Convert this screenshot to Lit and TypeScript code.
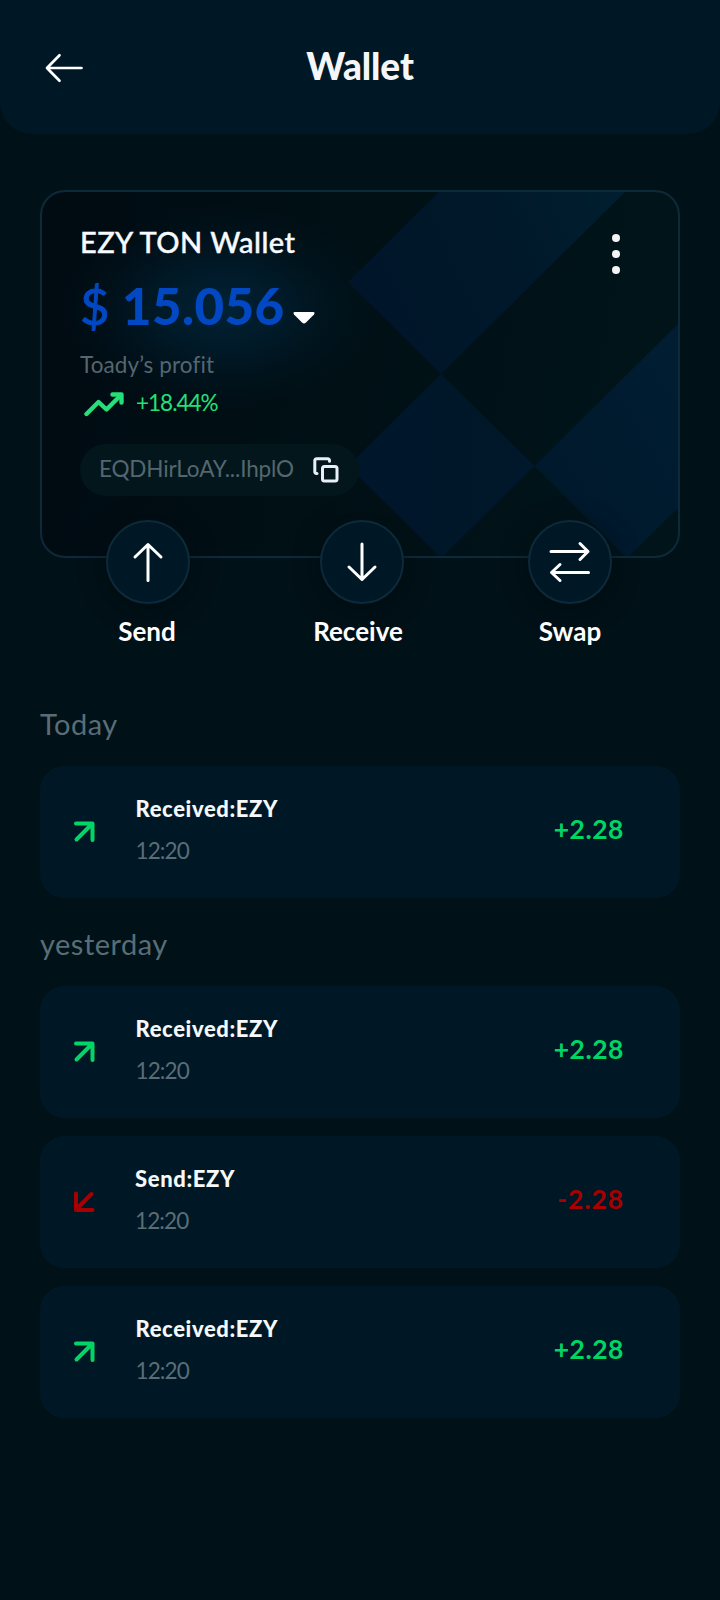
import { LitElement, html, css, svg } from "lit";
import { customElement, property } from "lit/decorators.js";

interface Tx {
  kind: "in" | "out";
  title: string;
  time: string;
  amount: string;
}

@customElement("tx-row")
class TxRow extends LitElement {
  @property({ attribute: false }) tx!: Tx;

  static styles = css`
    :host { display: block; }
    .row {
      display: flex;
      align-items: center;
      box-sizing: border-box;
      height: 132px;
      padding: 0 56px 0 31.5px;
      border-radius: 24px;
      background: #001825;
      white-space: nowrap;
    }
    .icon { display: block; width: 24px; height: 24px; }
    .in { color: #00d566; }
    .out { color: #a80000; }
    .text { display: flex; flex-direction: column; gap: 14px; margin: 0 auto 4px 40px; }
    .out-text { margin-left: 39.5px; }
    .title { font-weight: 900; font-size: 22px; line-height: 28px; color: #f6f8fa; letter-spacing: 0.62px; }
    .time { font-size: 22.5px; line-height: 28px; color: #5a6d76; letter-spacing: -0.9px; }
    .amount { font-weight: 700; font-size: 26.5px; line-height: 32px; margin-bottom: 7px; letter-spacing: 0.5px; }
    .amount.out { letter-spacing: 0.9px; }
  `;

  render() {
    const { kind, title, time, amount } = this.tx;
    const d = kind === "in" ? "M4.5 19.5 19.5 4.5M4 3.5H20.5V20" : "M19.500 4 4.500 19M4 3.500V20H20.500";
    return html`
      <div class="row">
        <svg class="icon ${kind}" viewBox="0 0 24 24" fill="none" stroke="currentColor" stroke-width="4"
          stroke-linecap="round" stroke-linejoin="round"><path d=${d} /></svg>
        <div class="text ${kind}-text">
          <span class="title">${title}</span>
          <span class="time">${time}</span>
        </div>
        <span class="amount ${kind}">${amount}</span>
      </div>
    `;
  }
}

const ACTIONS = [
  { id: "send", label: "Send", art: svg`<path d="M21 39.5V3.5M8 16 21 3.5 34 16" />` },
  { id: "receive", label: "Receive", art: svg`<path d="M21 3V38.5M8 26 21 38.5 34 26" />` },
  { id: "swap", label: "Swap", art: svg`<path d="M2 10.5H39M31 2.5 39 10.5 31 18.5M39.500 31.5H3M11 23.5 2.500 31.5 11 39.5" />` },
];

const TODAY: Tx[] = [{ kind: "in", title: "Received:EZY", time: "12:20", amount: "+2.28" }];
const YESTERDAY: Tx[] = [
  { kind: "in", title: "Received:EZY", time: "12:20", amount: "+2.28" },
  { kind: "out", title: "Send:EZY", time: "12:20", amount: "-2.28" },
  { kind: "in", title: "Received:EZY", time: "12:20", amount: "+2.28" },
];

@customElement("app-root")
class AppRoot extends LitElement {
  static styles = css`
    :host {
      display: block;
      min-height: 1600px;
      background: #001117;
      font-family: Lato, "Open Sans", sans-serif;
      white-space: nowrap;
    }
    svg { display: block; flex: none; }
    .header {
      display: grid;
      grid-template-columns: 44px 1fr 44px;
      align-items: center;
      box-sizing: border-box;
      height: 134px;
      padding: 0 42px;
      border-radius: 0 0 32px 32px;
      background: #001825;
    }
    .back { margin-top: 2px; }
    .heading { margin: 0 0 2px; text-align: center; font-size: 37px; line-height: 44px; font-weight: 900; color: #f5f6f8; letter-spacing: -0.1px; }
    .main { padding: 56px 40px 0; }
    .card {
      position: relative;
      box-sizing: border-box;
      height: 368px;
      padding: 32px 38px;
      border: 2px solid #0d2a3a;
      border-radius: 25px;
      overflow: hidden;
      background: linear-gradient(100deg, #000b12 0%, #001015 45%, #00151b 100%);
    }
    .art { position: absolute; inset: -2px; }
    .body { position: relative; display: flex; justify-content: space-between; }
    .name { font-size: 29px; line-height: 36px; font-weight: 500; color: #f7fbff; letter-spacing: 0.45px; -webkit-text-stroke: 0.4px #f7fbff; }
    .balance { display: flex; align-items: flex-end; height: 60px; margin-top: 16px; color: #0148c2; line-height: 60px; font-size: 51px; }
    .currency { width: 42px; font-size: 51px; -webkit-text-stroke: 1px #0148c2; }
    .value { width: 171px; font-weight: 900; letter-spacing: 0.4px; }
    .caret { margin-bottom: 11px; }
    .caption { margin-top: 15px; font-size: 22.5px; line-height: 28px; color: #54666f; letter-spacing: 0.1px; }
    .gain { display: flex; align-items: center; margin-top: 9px; gap: 11px; padding-left: 3px; font-size: 22.5px; line-height: 28px; color: #25e07a; }
    .percent { letter-spacing: -1px; }
    .trend { margin: 3px 0 1px; }
    .address {
      display: flex;
      align-items: center;
      justify-content: space-between;
      box-sizing: border-box;
      width: 279px;
      height: 52px;
      margin-top: 26px;
      padding: 0 19.5px 0 19px;
      border-radius: 26px;
      background: #02161c;
      color: #54666f;
      font-size: 22.5px;
      line-height: 28px;
    }
    .hash { margin-bottom: 3px; letter-spacing: -0.15px; }
    .menu { margin: 8px 19px 0 0; }
    .actions { position: relative; display: flex; margin-top: -38px; padding-left: 66px; }
    .action { display: flex; flex-direction: column; align-items: center; width: 84px; gap: 11px; }
    .receive { margin-left: 130px; }
    .swap { margin-left: 124px; }
    .circle {
      display: flex;
      align-items: center;
      justify-content: center;
      box-sizing: border-box;
      width: 84px;
      height: 84px;
      border: 2px solid #0d2a3a;
      border-radius: 50%;
      background: #001825;
      box-shadow: 0 4px 28px rgba(0, 8, 12, 0.45);
    }
    .label { font-size: 26px; line-height: 32px; font-weight: 700; color: #ffffff; }
    .send .label { margin-right: 2px; }
    .receive .label { margin: 0 -2px 0 -10px; }
    .group { margin: 0; font-size: 29px; line-height: 36px; font-weight: 400; color: #5a6d76; letter-spacing: 0.5px; }
    .today { margin-top: 59px; }
    .yesterday { margin-top: 28px; }
    .list { display: flex; flex-direction: column; gap: 18px; margin-top: 24px; }
  `;

  private renderCard() {
    return html`
      <section class="card">
        <svg class="art" width="640" height="368" viewBox="40 190 640 368">
          <defs>
            <radialGradient id="glow"><stop offset="0" stop-color="#022335" /><stop offset=".4" stop-color="#011d2e" stop-opacity=".75" /><stop offset="1" stop-color="#001420" stop-opacity="0" /></radialGradient>
            <linearGradient id="band" x1="0" x2="1" y1=".3" y2="0"><stop offset="0" stop-color="#001529" /><stop offset=".55" stop-color="#00192a" /><stop offset="1" stop-color="#001f30" /></linearGradient>
            <linearGradient id="tile" x1="0" x2="1"><stop offset="0" stop-color="#00162a" /><stop offset="1" stop-color="#00182b" /></linearGradient>
            <linearGradient id="edge" x1=".3" x2="1" y1="1" y2=".3"><stop offset="0" stop-color="#00182c" /><stop offset="1" stop-color="#001d31" /></linearGradient>
          </defs>
          <ellipse cx="222" cy="308" rx="165" ry="105" fill="url(#glow)" />
          <path fill="url(#band)" d="M441 190 348 282 441 374 627 190Z" />
          <path fill="url(#tile)" d="M441 374 348 466 441 558 534.5 466Z" />
          <path fill="url(#edge)" d="M534.5 466 680 322V506L627 558Z" />
          <rect x="41" y="191" width="638" height="366" rx="24" fill="none" stroke="#0d2a3a" stroke-width="2" />
        </svg>
        <div class="body">
          <div>
            <div class="name">EZY TON Wallet</div>
            <div class="balance">
              <span class="currency">$</span><span class="value">15.056</span>
              <svg class="caret" width="22" height="14" viewBox="0 0 22 14"><path fill="#fff" d="M2 1H20Q22.500 1.300 21 3.500L13 11.500Q11 13.500 9 11.500L1 3.500Q-.5 1.300 2 1Z" /></svg>
            </div>
            <div class="caption">Toady’s profit</div>
            <div class="gain">
              <svg class="trend" width="42" height="26" viewBox="0 0 42 26" fill="none" stroke="#25e07a" stroke-width="4.400" stroke-linecap="round" stroke-linejoin="round"><path d="M3.500 23 15.500 11 23.500 18.500 37 5" /><path d="M29.500 3.500H38.500V11.500" /></svg>
              <span class="percent">+18.44%</span>
            </div>
            <div class="address">
              <span class="hash">EQDHirLoAY...IhplO</span>
              <svg width="28" height="28" viewBox="0 0 28 28" fill="none" stroke="#e8effa" stroke-width="3" stroke-linecap="round" stroke-linejoin="round"><rect x="10.500" y="10.500" width="14.500" height="14.500" rx="2" /><path d="M5 17.500H4.500Q2.800 17.500 2.800 15.500V4.800Q2.800 2.800 4.800 2.800H15.500Q17.500 2.800 17.500 4.800V5.200" /></svg>
            </div>
          </div>
          <svg class="menu" width="10" height="44" viewBox="0 0 10 44" fill="#f4f4f4"><circle cx="5" cy="6" r="4" /><circle cx="5" cy="22" r="4" /><circle cx="5" cy="38" r="4" /></svg>
        </div>
      </section>
    `;
  }

  render() {
    return html`
      <header class="header">
        <svg class="back" width="44" height="32" viewBox="0 0 44 32" fill="none" stroke="#fff" stroke-width="2.700" stroke-linecap="round" stroke-linejoin="round"><path d="M39.500 16H5M17.500 3.300 5 16 17.500 28.700" /></svg>
        <h1 class="heading">Wallet</h1>
      </header>
      <main class="main">
        ${this.renderCard()}
        <nav class="actions">
          ${ACTIONS.map((a) => html`
            <div class="action ${a.id}">
              <div class="circle">
                <svg width="42" height="42" viewBox="0 0 42 42" fill="none" stroke="#fff" stroke-width="3" stroke-linecap="round" stroke-linejoin="round">${a.art}</svg>
              </div>
              <span class="label">${a.label}</span>
            </div>
          `)}
        </nav>
        <h2 class="group today">Today</h2>
        <div class="list">${TODAY.map((t) => html`<tx-row .tx=${t}></tx-row>`)}</div>
        <h2 class="group yesterday">yesterday</h2>
        <div class="list">${YESTERDAY.map((t) => html`<tx-row .tx=${t}></tx-row>`)}</div>
      </main>
    `;
  }
}
